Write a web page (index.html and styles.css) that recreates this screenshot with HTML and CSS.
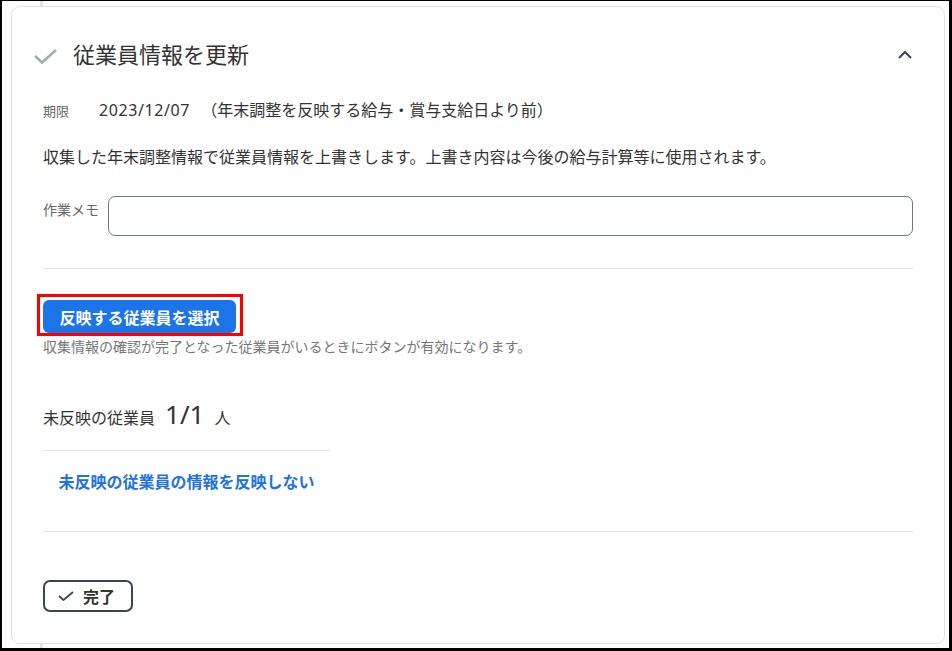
FILE: index.html
```html
<!DOCTYPE html>
<html lang="ja">
<head>
    <meta charset="UTF-8">
    <meta name="viewport" content="width=device-width, initial-scale=1.0">
    <title>従業員情報を更新</title>
    <link rel="stylesheet" href="styles.css">
</head>
<body>
    <div class="page">
        <div class="task-card">
            <div class="task-header">
                <svg class="task-check" width="24" height="16" viewBox="0 0 24 16">
                    <polyline points="2,8 9,14.5 23,2" fill="none" stroke="#a3abb4" stroke-width="2.6" stroke-linejoin="miter"/>
                </svg>
                <h2 class="task-title">従業員情報を更新</h2>
                <svg class="task-toggle" width="14" height="9" viewBox="0 0 14 9">
                    <polyline points="1,8 7,2 13,8" fill="none" stroke="#3b4552" stroke-width="2"/>
                </svg>
            </div>

            <div class="meta-row">
                <span class="meta-label">期限</span>
                <span class="meta-value"><span class="meta-date">2023/12/07</span>（年末調整を反映する給与・賞与支給日より前）</span>
            </div>

            <p class="task-desc">収集した年末調整情報で従業員情報を上書きします。上書き内容は今後の給与計算等に使用されます。</p>

            <div class="memo-row">
                <label for="memo" class="memo-label">作業メモ</label>
                <input type="text" id="memo" class="memo-input">
            </div>

            <hr class="divider">

            <div class="highlight">
                <button type="button" class="primary-button">反映する従業員を選択</button>
            </div>
            <p class="hint">収集情報の確認が完了となった従業員がいるときにボタンが有効になります。</p>

            <div class="count-row">
                <span class="count-label">未反映の従業員</span>
                <span class="count-num">1/1</span>
                <span class="count-unit">人</span>
            </div>

            <hr class="divider short">

            <div class="skip-box">
                <a href="#" class="skip-link">未反映の従業員の情報を反映しない</a>
            </div>

            <hr class="divider bottom">

            <button type="button" class="done-button">
                <svg width="16" height="10" viewBox="0 0 16 10">
                    <polyline points="1,5 5.5,9 15,1" fill="none" stroke="#3b4552" stroke-width="1.8"/>
                </svg>
                完了
            </button>
        </div>
    </div>
</body>
</html>
```

FILE: styles.css
```css
* {
    margin: 0;
    padding: 0;
    box-sizing: border-box;
}

html, body {
    width: 952px;
    height: 651px;
    overflow: hidden;
}

body {
    font-family: 'Noto Sans', 'Noto Sans CJK JP', sans-serif;
    color: #333;
    background: #fff;
    border-style: solid;
    border-color: #000;
    border-width: 1px 3px 3px 2px;
}

.page {
    height: 100%;
    display: flex;
    flex-direction: column;
    padding: 5px 4px 4px 9px;
    background: linear-gradient(#dde2e8, #dde2e8) no-repeat 38px 0 / 3px 100%;
}

.task-card {
    flex: 1;
    background: white;
    border: 1px solid #dfe1e4;
    border-radius: 9px;
    padding: 0 31px 31px 31px;
}

.task-header {
    display: flex;
    align-items: center;
    height: 48px;
    margin: 23px 0 0 -10px;
}

.task-check {
    margin-top: 3px;
}

.task-title {
    font-size: 22px;
    font-weight: normal;
    line-height: 48px;
    margin-left: 16px;
    flex: 1;
    color: #333;
}

.task-toggle {
    margin-right: 1px;
}

.meta-row {
    display: flex;
    align-items: baseline;
    margin-top: 21px;
    line-height: 22px;
}

.meta-label {
    font-size: 13px;
    color: #666;
    width: 56px;
}

.meta-value {
    font-size: 16px;
}

.meta-date {
    letter-spacing: 0.6px;
    margin-right: 11px;
}

.task-desc {
    margin-top: 24px;
    font-size: 16px;
    line-height: 22px;
}

.memo-row {
    display: flex;
    margin-top: 28px;
}

.memo-label {
    font-size: 14px;
    color: #666;
    line-height: 16px;
    padding-top: 6px;
    width: 65px;
}

.memo-input {
    flex: 1;
    height: 40px;
    border: 1px solid #6b7785;
    border-radius: 7px;
    padding: 0 12px;
    font-size: 16px;
}

.memo-input:focus {
    outline: none;
    border-color: #1a73e8;
}

.divider {
    border: none;
    border-top: 1px solid #e3e5e8;
    margin-top: 32px;
}

.divider.short {
    width: 287px;
    margin-top: 20px;
}

.divider.bottom {
    margin-top: 38px;
}

.highlight {
    display: inline-block;
    margin: 25px 0 0 -6px;
    border: 3px solid #f00;
    padding: 3px 4px 0 3px;
}

.primary-button {
    display: block;
    width: 193px;
    height: 33px;
    background: #1b74e8;
    color: white;
    border: none;
    border-radius: 6px;
    font-family: inherit;
    font-size: 16px;
    font-weight: bold;
    cursor: pointer;
}

.primary-button:hover {
    background: #1462c9;
}

.hint {
    margin-top: 2px;
    font-size: 14px;
    line-height: 18px;
    color: #777;
}

.count-row {
    display: flex;
    align-items: baseline;
    margin-top: 42px;
    height: 32px;
    line-height: 32px;
}

.count-label {
    font-size: 16px;
}

.count-num {
    font-size: 26px;
    margin: 0 10px 0 10px;
}

.count-unit {
    font-size: 16px;
}

.skip-box {
    width: 287px;
    margin-top: 20px;
    text-align: center;
    line-height: 22px;
}

.skip-link {
    color: #2172e0;
    font-size: 16px;
    font-weight: bold;
    text-decoration: none;
}

.skip-link:hover {
    text-decoration: underline;
}

.done-button {
    display: flex;
    align-items: center;
    gap: 9px;
    margin-top: 48px;
    width: 90px;
    height: 32px;
    padding-left: 13px;
    background: white;
    border: 2px solid #3b4552;
    border-radius: 7px;
    font-family: inherit;
    font-size: 16px;
    font-weight: bold;
    color: #333;
    cursor: pointer;
}
```
